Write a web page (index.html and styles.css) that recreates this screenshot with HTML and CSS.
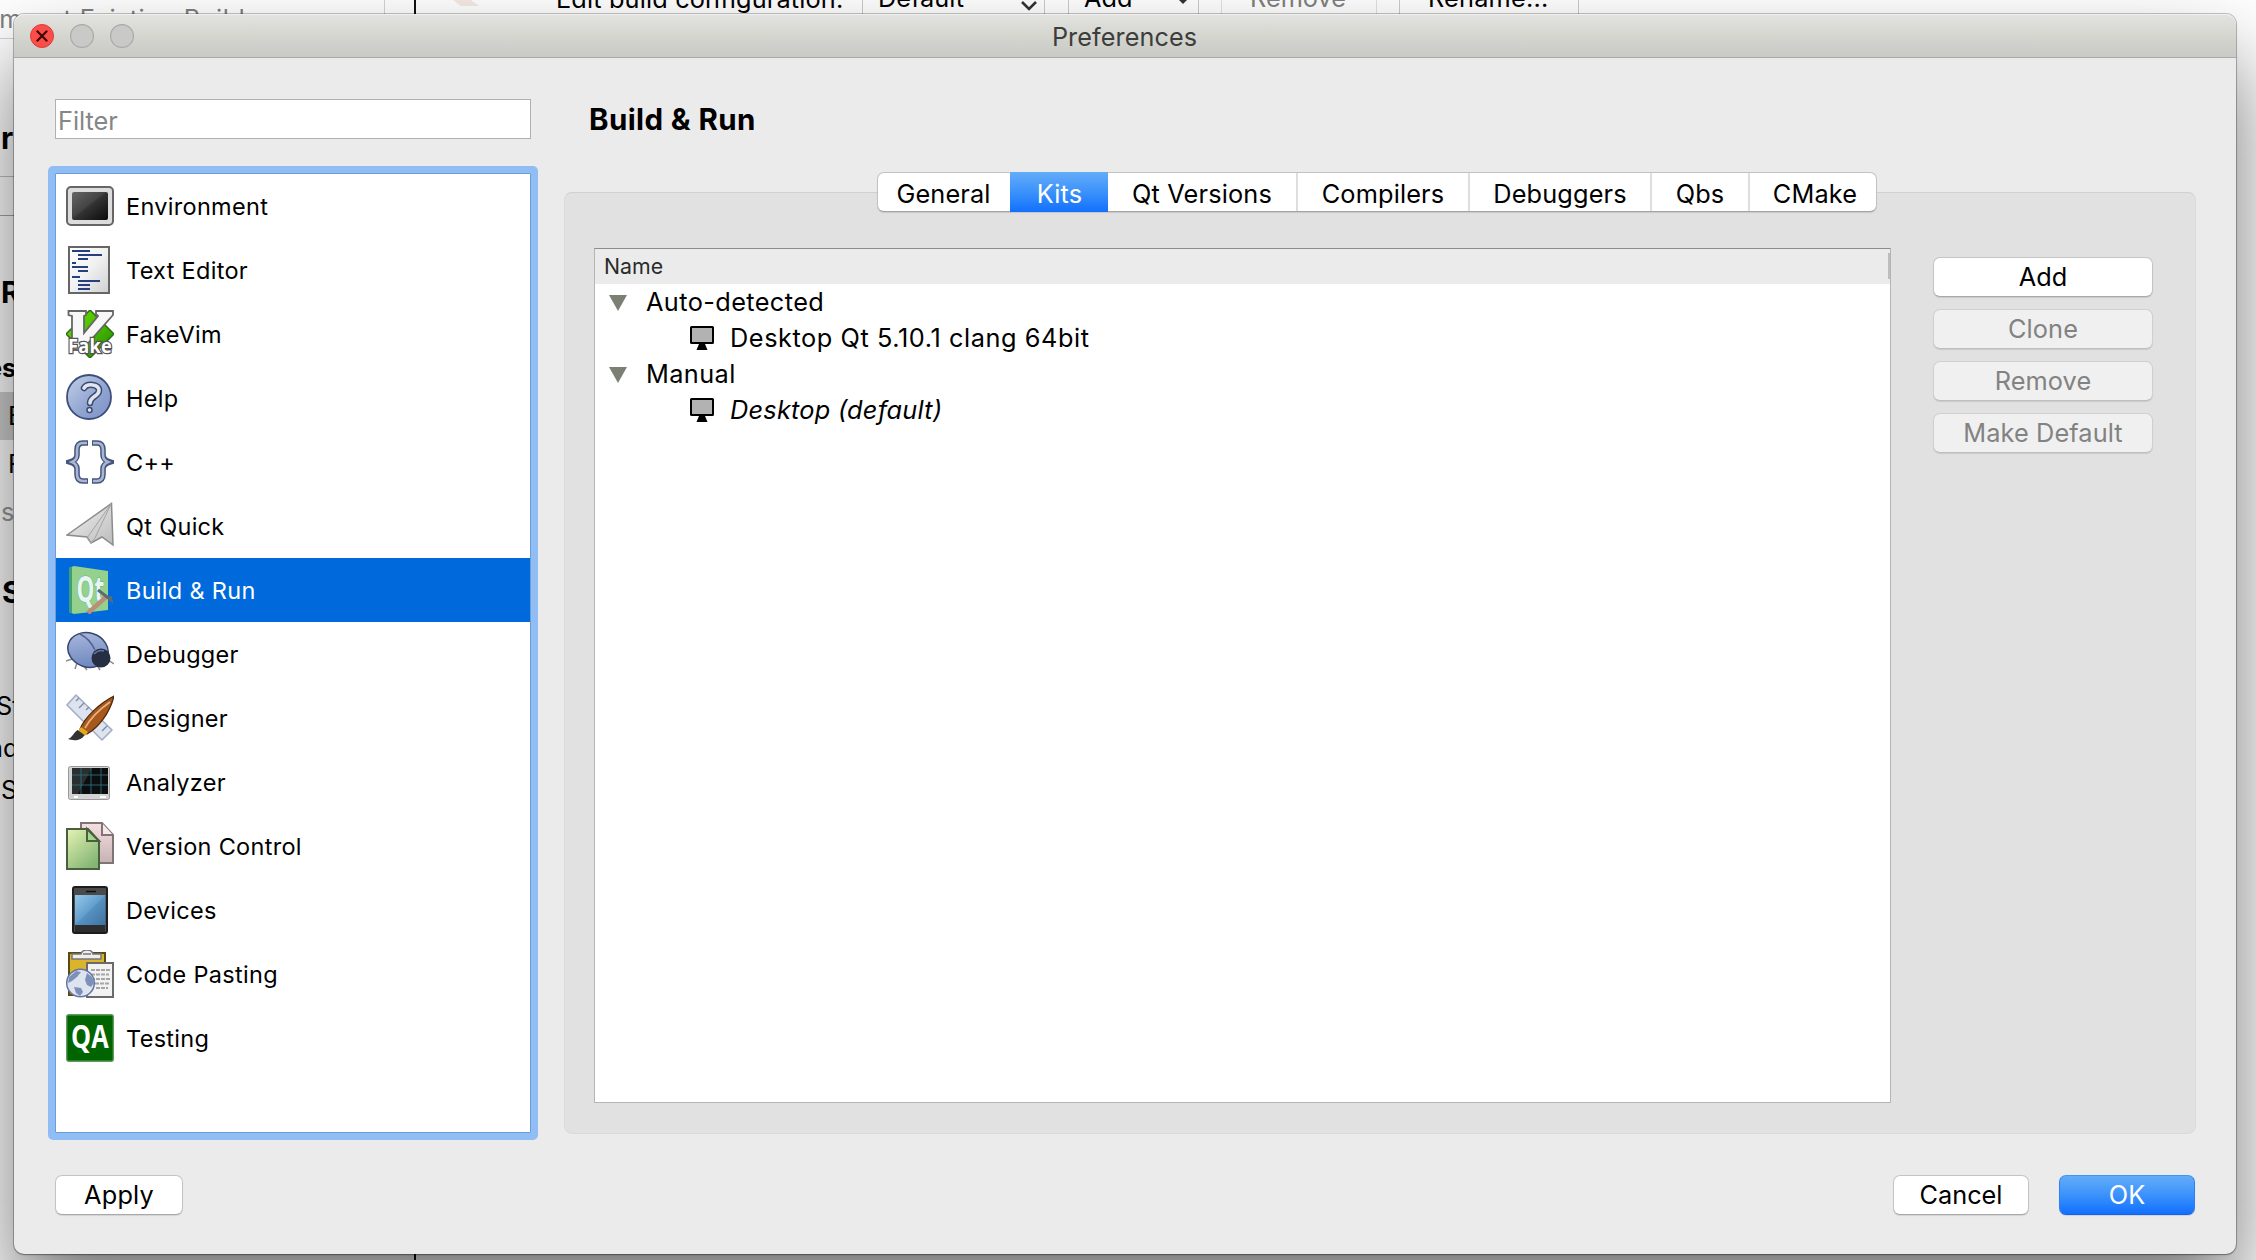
FILE: index.html
```html
<!DOCTYPE html>
<html lang="en">
<head>
<meta charset="utf-8">
<title>Preferences</title>
<link rel="stylesheet" href="styles.css">
</head>
<body>
<div class="backdrop">
  <div class="toolbar">
    <span class="import">Import Existing Build...</span>
    <span class="edit">Edit build configuration:</span>
    <span class="tool tool-default">Default<svg class="chev" width="18" height="10" viewBox="0 0 18 10"><path d="M2 1l7 7 7-7" fill="none" stroke="#333" stroke-width="2.6"/></svg></span>
    <span class="tool tool-add">Add<svg class="tip" width="8" height="4" viewBox="0 0 8 4"><path d="M0 0h8L4 4z" fill="#333"/></svg></span>
    <span class="tool tool-remove">Remove</span>
    <span class="tool tool-rename">Rename...</span>
    <svg class="hammer" width="26" height="6" viewBox="0 0 26 6"><path d="M0 0h18l8 6H8z" fill="#f6e9e5"/></svg>
  </div>
  <div class="splitter"></div>
  <div class="rule rule-a"></div>
  <div class="rule rule-b"></div>
  <div class="picked"></div>
  <span class="frag f1">r</span>
  <span class="frag f2">R</span>
  <span class="frag f3">es</span>
  <span class="frag f4">E</span>
  <span class="frag f5">F</span>
  <span class="frag f6">s</span>
  <span class="frag f7">S</span>
  <span class="frag f8">St</span>
  <span class="frag f9">nd</span>
  <span class="frag f10">S</span>
</div>

<div class="window">
  <div class="titlebar">
    <div class="lights">
      <svg width="24" height="24" viewBox="0 0 24 24"><circle cx="12" cy="12" r="11.5" fill="#fc4e49" stroke="#dc3c38"/><path d="M6.8 6.8l10.4 10.4M17.2 6.8L6.800 17.2" stroke="#3f0a08" stroke-width="2.2"/></svg>
      <svg width="24" height="24" viewBox="0 0 24 24"><circle cx="12" cy="12" r="11.4" fill="#c9c9c8" stroke="#a9a9a7" stroke-width="1.2"/></svg>
      <svg width="24" height="24" viewBox="0 0 24 24"><circle cx="12" cy="12" r="11.4" fill="#c9c9c8" stroke="#a9a9a7" stroke-width="1.2"/></svg>
    </div>
    <span class="title">Preferences</span>
  </div>

  <div class="content">
    <div class="side">
      <div class="filter">Filter</div>
      <div class="list">
        <div class="item"><svg viewBox="0 0 48 48"><defs><linearGradient id="scr" x1="0" y1="0" x2="1" y2="1"><stop offset="0" stop-color="#666"/><stop offset=".45" stop-color="#444"/><stop offset=".5" stop-color="#333"/><stop offset="1" stop-color="#0a0a0a"/></linearGradient><linearGradient id="pap" x1="0" y1="0" x2="1" y2="1"><stop offset="0" stop-color="#fff"/><stop offset=".5" stop-color="#f1f1f1"/><stop offset="1" stop-color="#cfcfcf"/></linearGradient></defs><rect x="1" y="5" width="46" height="38" rx="4" fill="#dcdcdc" stroke="#666" stroke-width="2"/><rect x="6" y="10" width="36" height="28" rx="2" fill="url(#scr)"/></svg><span>Environment</span></div>

        <div class="item"><svg viewBox="0 0 48 48"><rect x="3" y="1" width="40" height="46" fill="url(#pap)" stroke="#666" stroke-width="2"/><path d="M6 5h18M12 9h24M12 13h10M6 17h4M6 21h16M12 25h10M6 31h8M12 35h22M12 39h12M12 43h12" stroke="#24407f" stroke-width="2"/></svg><span>Text Editor</span></div>

        <div class="item"><svg viewBox="0 0 48 48"><defs><linearGradient id="grn" x1="0" y1="0" x2="1" y2="1"><stop offset="0" stop-color="#6ee800"/><stop offset="1" stop-color="#208a00"/></linearGradient></defs><path d="M24 0l24 24-24 24L0 24z" fill="url(#grn)" stroke="#2f6a18" stroke-width="1.500"/><path d="M2.500 1h17.500v4l-2 1v17L32 6l-2-2V1h17v4L16 40H6V6L2.500 5z" fill="#f7f7f7" stroke="#666" stroke-width="1.800"/><text x="2" y="42.500" class="fake" textLength="44" lengthAdjust="spacingAndGlyphs">Fake</text></svg><span>FakeVim</span></div>

        <div class="item"><svg viewBox="0 0 48 48"><defs><linearGradient id="hlp" x1="0" y1="0" x2="1" y2="1"><stop offset="0" stop-color="#c3cfe8"/><stop offset=".6" stop-color="#8fa3d0"/><stop offset="1" stop-color="#7d93c6"/></linearGradient></defs><circle cx="23" cy="23" r="22" fill="url(#hlp)" stroke="#3b4e7c" stroke-width="1.800"/><g fill="none" stroke-linecap="round"><path d="M18 14c3-5 15-4 15 2.500 0 6-9 5.500-9 12.500M23.500 36v.1" stroke="#3a4a70" stroke-width="6.500"/><path d="M18 14c3-5 15-4 15 2.500 0 6-9 5.500-9 12.500M23.500 36v.1" stroke="#dfe4ee" stroke-width="3.600"/></g></svg><span>Help</span></div>

        <div class="item"><svg viewBox="0 0 48 48"><g fill="none"><path d="M22 5h-5q-6 0-6 7v5q0 5-7 7 7 2 7 7v5q0 7 6 7h5M26 5h5q6 0 6 7v5q0 5 7 7-7 2-7 7v5q0 7-6 7h-5" stroke="#46557d" stroke-width="5.600"/><path d="M21 5h-4q-6 0-6 7v5q0 5-5 7 5 2 5 7v5q0 7 6 7h4M27 5h4q6 0 6 7v5q0 5 5 7-5 2-5 7v5q0 7-6 7h-4" stroke="#a9b6d2" stroke-width="2.600"/></g></svg><span>C++</span></div>

        <div class="item"><svg viewBox="0 0 48 48"><defs><linearGradient id="pln" x1="0" y1="0" x2="1" y2="1"><stop offset="0" stop-color="#f2f2f2"/><stop offset="1" stop-color="#bcbcbc"/></linearGradient></defs><path d="M1 33L45.500 1.500 47 43l-11-8-11 6-4-6z" fill="url(#pln)" stroke="#8c8c8c" stroke-width="1.500"/><path d="M45 2L21 36l4 5 4-5L45 2" fill="none" stroke="#a3a3a3" stroke-width="1"/></svg><span>Qt Quick</span></div>

        <div class="item on"><svg viewBox="0 0 48 48"><path d="M3 2l5-2 34 5v39L8 48l-5-2z" fill="#93d18c"/><path d="M3 2l3-1v46l-3-1z" fill="#3f9d78"/><text x="10.500" y="36" class="qt" textLength="28" lengthAdjust="spacingAndGlyphs">Qt</text><path d="M22 47l18-16" stroke="#b98f78" stroke-width="4.500"/><path d="M32 24l13 10-1-4" stroke="#5f6b73" stroke-width="3" fill="none"/></svg><span>Build &amp; Run</span></div>

        <div class="item"><svg viewBox="0 0 48 48"><defs><linearGradient id="bug" x1="0" y1="0" x2=".6" y2="1"><stop offset="0" stop-color="#b0bddf"/><stop offset="1" stop-color="#6e88bf"/></linearGradient></defs><path d="M6 29l-6 2M11 33l-2 6M17 35l4 5M31 35l3 5M42 30l6 4" stroke="#8b8b8b" stroke-width="1.500"/><ellipse cx="22" cy="20" rx="20.500" ry="17" transform="rotate(18 22 20)" fill="url(#bug)" stroke="#36466e" stroke-width="1.500"/><path d="M14 4q10 5 15 16" fill="none" stroke="#50618e" stroke-width="1.500"/><ellipse cx="35" cy="28" rx="9.500" ry="9.500" fill="#252e42"/><path d="M28 24q5-5 10-3" stroke="#66779f" stroke-width="1.500" fill="none"/></svg><span>Debugger</span></div>

        <div class="item"><svg viewBox="0 0 48 48"><path d="M10 1l36 35-10 10L1 11z" fill="#dde3ef" stroke="#a3aec5" stroke-width="1.600" stroke-linejoin="round"/><path d="M13 4l-3 3M18 9l-5 5M23 13l-3 3M35 26l-3 3M41 32l-5 5" stroke="#7f8ba5" stroke-width="1.400"/><path d="M48 2C34 9 19 23 14 35l7 5C32 34 44 19 48 2z" fill="#a9581b" stroke="#4d260b" stroke-width="1.200"/><path d="M44 8C34 15 24 25 19 34" stroke="#e8b183" stroke-width="1.600" fill="none"/><path d="M15 33l7 5-3 4-7-5z" fill="#e2a91f"/><path d="M11.500 36l7 5c-3 6-11 6-16.500 4 5-2 5-6 9.500-9z" fill="#333"/></svg><span>Designer</span></div>

        <div class="item"><svg viewBox="0 0 48 48"><rect x="2.500" y="8.500" width="41" height="33" rx="2" fill="#d2d2d2" stroke="#999"/><rect x="6" y="10" width="36" height="26" fill="#0b0d0e"/><path d="M6 10h20L12 36H6z" fill="#2b2e30"/><path d="M15 10v26M25 10v26M35 10v26M6 17h36M6 27h36" stroke="#2b6570" stroke-width="1"/><path d="M8 39h4M34 39h6" stroke="#fff" stroke-width="2"/></svg><span>Analyzer</span></div>

        <div class="item"><svg viewBox="0 0 48 48"><defs><linearGradient id="vg" x1="0" y1="0" x2=".7" y2="1"><stop offset="0" stop-color="#e6f3b4"/><stop offset="1" stop-color="#84b573"/></linearGradient><linearGradient id="vp" x1="0" y1="0" x2="0" y2="1"><stop offset="0" stop-color="#f6dfe1"/><stop offset="1" stop-color="#c6b2b3"/></linearGradient></defs><path d="M15 1h21l11 12v28H15z" fill="url(#vp)" stroke="#807576" stroke-width="2"/><path d="M36 1v12h11" fill="#f6e9ea" stroke="#807576" stroke-width="2"/><path d="M1 7h21l11 12v28H1z" fill="url(#vg)" stroke="#48603f" stroke-width="2"/><path d="M21 7v12h12z" fill="#a5d68f" stroke="#48603f" stroke-width="2"/></svg><span>Version Control</span></div>

        <div class="item"><svg viewBox="0 0 48 48"><defs><linearGradient id="dev" x1="0" y1="0" x2="1" y2="1"><stop offset="0" stop-color="#95c7ea"/><stop offset=".48" stop-color="#63a0cf"/><stop offset=".52" stop-color="#5590c0"/><stop offset="1" stop-color="#3f739f"/></linearGradient></defs><rect x="7" y="1" width="34" height="46" rx="2" fill="#4a4a4a" stroke="#1c1c1c" stroke-width="2"/><path d="M9 39h30v7H9z" fill="#2d2d2d"/><path d="M9 9h30.500v30H9z" fill="url(#dev)"/><path d="M20 5.500h10" stroke="#111" stroke-width="1.500"/></svg><span>Devices</span></div>

        <div class="item"><svg viewBox="0 0 48 48"><rect x="3" y="3" width="36" height="42" fill="#dcb42c" stroke="#5a4a14" stroke-width="2"/><path d="M6 9V4h9q1-4 6-4t6 4h8v5z" fill="#eee" stroke="#777" stroke-width="1.500"/><path d="M17 4h8" stroke="#777" stroke-width="1.500"/><rect x="21" y="13" width="26" height="34" fill="#f2f2f2" stroke="#6b6b6b" stroke-width="2"/><path d="M25 20h20M25 24.500h18M25 29h19M29 33.500h14M30 38h12" stroke="#a5a5a5" stroke-width="1.800" stroke-dasharray="4 1"/><circle cx="14.500" cy="33" r="13.800" fill="#dde4f0" stroke="#6176a3" stroke-width="1.500"/><path d="M3 27l7-6 5 1-4 5-5 4-4 2zM21 23l5 4 2 6-3 4-4-2-2-5zM8 37l7 1 2 4-3 4-4-3z" fill="#7d90b8"/></svg><span>Code Pasting</span></div>

        <div class="item"><svg viewBox="0 0 48 48"><rect x=".7" y=".7" width="46.600" height="46.600" rx="2" fill="#006400" stroke="#5c9d5c" stroke-width="1.400"/><text x="5" y="33.500" class="qa" textLength="38" lengthAdjust="spacingAndGlyphs">QA</text></svg><span>Testing</span></div>
      </div>
    </div>

    <div class="main">
      <h1>Build &amp; Run</h1>
      <div class="tabs">
        <span class="tab t-general">General</span><span class="tab t-kits active">Kits</span><span class="tab t-qt">Qt Versions</span><span class="tab t-comp">Compilers</span><span class="tab t-debug">Debuggers</span><span class="tab t-qbs">Qbs</span><span class="tab t-cmake">CMake</span>
      </div>
      <div class="pane">
        <div class="tree">
          <div class="head"><span>Name</span><i></i></div>
          <div class="row group"><svg width="18" height="16" viewBox="0 0 18 16"><path d="M0 0h18L9 16z" fill="#7c8074"/></svg><span>Auto-detected</span></div>
          <div class="row leaf"><svg width="24" height="24" viewBox="0 0 24 24"><rect x="1" y="1" width="22" height="16" rx=".5" fill="#b2b2b2" stroke="#000" stroke-width="2"/><path d="M9 18h6l2.500 6h-11z"/></svg><span>Desktop Qt 5.10.1 clang 64bit</span></div>
          <div class="row group"><svg width="18" height="16" viewBox="0 0 18 16"><path d="M0 0h18L9 16z" fill="#7c8074"/></svg><span>Manual</span></div>
          <div class="row leaf default"><svg width="24" height="24" viewBox="0 0 24 24"><rect x="1" y="1" width="22" height="16" rx=".5" fill="#b2b2b2" stroke="#000" stroke-width="2"/><path d="M9 18h6l2.500 6h-11z"/></svg><em>Desktop (default)</em></div>
        </div>
        <div class="actions">
          <span class="btn">Add</span>
          <span class="btn off">Clone</span>
          <span class="btn off">Remove</span>
          <span class="btn off">Make Default</span>
        </div>
      </div>
    </div>
  </div>

  <div class="footer">
    <span class="btn apply">Apply</span>
    <span class="btn cancel">Cancel</span>
    <span class="btn ok">OK</span>
  </div>
</div>
</body>
</html>
```
FILE: styles.css
```css
* { box-sizing: border-box; }

body {
  margin: 0;
  width: 2256px;
  height: 1260px;
  position: relative;
  overflow: hidden;
  background: #fff;
  color: #000;
  font: 25.3px/30px Inter, "Liberation Sans", sans-serif;
}

svg { display: block; flex: none; }

/* Main window behind the dialog */
.backdrop { position: absolute; inset: 0; overflow: hidden; }
.toolbar span { position: absolute; white-space: nowrap; }
.toolbar .import {
  left: -60px; top: -20px; width: 445px; height: 59px;
  padding: 23px 0 0 51px;
  border: 1px solid #d4d4d4; border-radius: 8px;
  color: #808080; letter-spacing: .4px;
}
.toolbar .edit { left: 556px; top: -16px; letter-spacing: .15px; }
.toolbar .tool {
  top: -30px; height: 60px; padding: 12px 0 0 15px;
  border: 1px solid #cbcbcb; border-radius: 8px; background: #fff;
}
.toolbar .tool-default { left: 862px; width: 183px; }
.toolbar .tool-add { left: 1068px; width: 131px; }
.toolbar .tool-remove { left: 1221px; width: 156px; padding-left: 28px; color: #808080; border-color: #e2e2e2; }
.toolbar .tool-rename { left: 1399px; width: 180px; padding-left: 28px; letter-spacing: .2px; }
.chev { position: absolute; right: 6px; top: 30px; }
.tip { position: absolute; right: 11px; top: 29px; }
.hammer { position: absolute; left: 453px; top: 0; }
.splitter { position: absolute; left: 414px; top: 0; width: 2px; height: 1260px; background: #111; }
.rule { position: absolute; left: 0; width: 20px; height: 1px; background: #c2c2c2; }
.rule-a { top: 176px; }
.rule-b { top: 215px; background: #a5a5a5; }
.picked { position: absolute; left: 0; top: 392px; width: 20px; height: 48px; background: #cfcfcf; }
.frag { position: absolute; white-space: nowrap; }
.f1 { left: 1px; top: 123px; font-size: 30px; font-weight: 700; }
.f2 { left: 1px; top: 277px; font-size: 30px; font-weight: 700; }
.f3 { left: -13px; top: 353px; font-weight: 700; }
.f4 { left: 8px; top: 401px; }
.f5 { left: 8px; top: 449px; }
.f6 { left: 1px; top: 497px; color: #999; }
.f7 { left: 2px; top: 577px; font-size: 30px; font-weight: 700; }
.f8 { left: -4px; top: 691px; }
.f9 { left: -12px; top: 733px; }
.f10 { left: 1px; top: 775px; }

/* Dialog */
.window {
  position: absolute; left: 14px; top: 14px; width: 2222px; height: 1240px;
  display: flex; flex-direction: column;
  border-radius: 10px;
  background: #ebebeb;
  box-shadow: 0 0 0 1px rgba(0,0,0,.22), 0 1px 2px rgba(0,0,0,.25), 0 46px 84px rgba(0,0,0,.54);
}
.titlebar {
  height: 44px; flex: none;
  display: grid; grid-template-columns: 1fr auto 1fr; align-items: center;
  padding: 0 0 0 16px;
  border-radius: 10px 10px 0 0;
  border-bottom: 1px solid #a9a9a5;
  background: linear-gradient(#e3e4df, #d6d7d1 45%, #c9c9c6);
  box-shadow: inset 0 1px 0 #f0f0ee;
}
.lights { display: flex; gap: 16px; }
.title { font-size: 25.2px; letter-spacing: .1px; color: #3d3d3b; padding: 2px 17px 0 0; }

.content { display: flex; gap: 33px; padding: 41px 40px 0 41px; }
.side { width: 476px; flex: none; }
.filter {
  height: 40px; padding: 6px 0 0 2px;
  border: 1px solid #b0b0b0;
  background: #fff; color: #868686;
}
.list {
  height: 960px; margin-top: 34px;
  border: 1px solid #6c9ddb; border-radius: 1px;
  background: #fff;
  box-shadow: 0 0 0 7px #90bdf3;
  clip-path: inset(-7px round 5px);
}
.item {
  height: 64px; display: flex; align-items: center; gap: 12px;
  padding-left: 10px;
  font-size: 23.5px; letter-spacing: .3px;
}
.item svg { width: 48px; height: 48px; }
.item span { padding-top: 2px; }
.item.on { background: #0069db; color: #fff; }
.fake { font: 700 20px "Open Sans", sans-serif; fill: #fff; stroke: #555; stroke-width: 2.6px; paint-order: stroke; }
.qt { font: 700 35px "Open Sans", sans-serif; fill: #e8f5f4; stroke: #5bb08c; stroke-width: 1px; paint-order: stroke; }
.qa { font: 700 33px "Open Sans", sans-serif; fill: #fff; }

.main { flex: 1; display: flex; flex-direction: column; }
h1 {
  margin: 3px 0 0 25px; height: 70px;
  font-size: 29.5px; font-weight: 700; line-height: 34px; letter-spacing: .4px;
}
.tabs {
  display: flex; align-self: center; height: 40px; width: 1000px;
  position: relative; left: -3px; z-index: 1;
  border: 1px solid #c3c3c3; border-bottom-color: #a4a4a4; border-radius: 7px;
  background: #fff;
  box-shadow: 0 1px 1px rgba(0,0,0,.12);
}
.tab {
  display: flex; justify-content: center; align-items: center;
  padding-top: 3px;
  border-right: 2px solid #dedede;
  letter-spacing: .15px;
}
.tab:last-child { border-right: 0; }
.t-general { width: 132px; border-right: 0; padding-right: 1px; }
.t-kits { width: 98px; padding-left: 1px; }
.t-qt { width: 190px; }
.t-comp { width: 172px; }
.t-debug { width: 182px; }
.t-qbs { width: 98px; }
.t-cmake { flex: 1; padding-left: 4px; }
.tab.active {
  margin: -1px 0; border: 0; color: #fff;
  background: linear-gradient(#64acf9, #3b92fb 50%, #1270fd);
}
.pane {
  height: 942px; margin-top: -20px;
  display: flex; gap: 42px;
  padding: 55px 0 0 29px;
  border: 1px solid #dadada; border-top-color: #d0d0d0; border-radius: 8px;
  background: #e1e1e1;
}
.tree {
  width: 1297px; height: 855px; flex: none;
  border: 1px solid #b5b5b5; border-top-color: #8c8c8c;
  background: #fff;
}
.head {
  height: 35px; display: flex; justify-content: space-between; align-items: center;
  padding: 0 0 2px 9px;
  background: #ebebeb; color: #2b2b2b;
  font-size: 21.3px;
}
.head i { width: 2px; height: 26px; background: #bdbdbd; }
.row { height: 36px; display: flex; align-items: center; letter-spacing: .4px; }
.row svg { margin-top: 1px; }
.group { padding-left: 14px; gap: 19px; }
.leaf { padding-left: 95px; gap: 16px; letter-spacing: .57px; }
.row.leaf svg { margin-top: 0; }
.default { letter-spacing: .25px; }

.actions { display: flex; flex-direction: column; gap: 12px; width: 220px; margin-top: 9px; }
.btn {
  display: flex; align-items: center; justify-content: center;
  height: 40px;
  border: 1px solid #c4c4c4; border-bottom-color: #a9a9a9; border-radius: 7px;
  background: #fff;
  box-shadow: 0 1px 1px rgba(0,0,0,.1);
}
.btn.off { background: #f0f0f0; color: #828282; border-color: #d0d0d0; border-bottom-color: #bfbfbf; letter-spacing: .1px; }

.footer { display: flex; padding: 41px 41px 0 41px; }
.apply { width: 128px; letter-spacing: .2px; }
.cancel { width: 136px; margin-left: auto; }
.ok {
  width: 136px; margin-left: 30px; color: #fff;
  border-color: #4494f5 #2a80f7 #1460f0;
  background: linear-gradient(#64acf9, #3b92fb 50%, #1270fd);
}
```
